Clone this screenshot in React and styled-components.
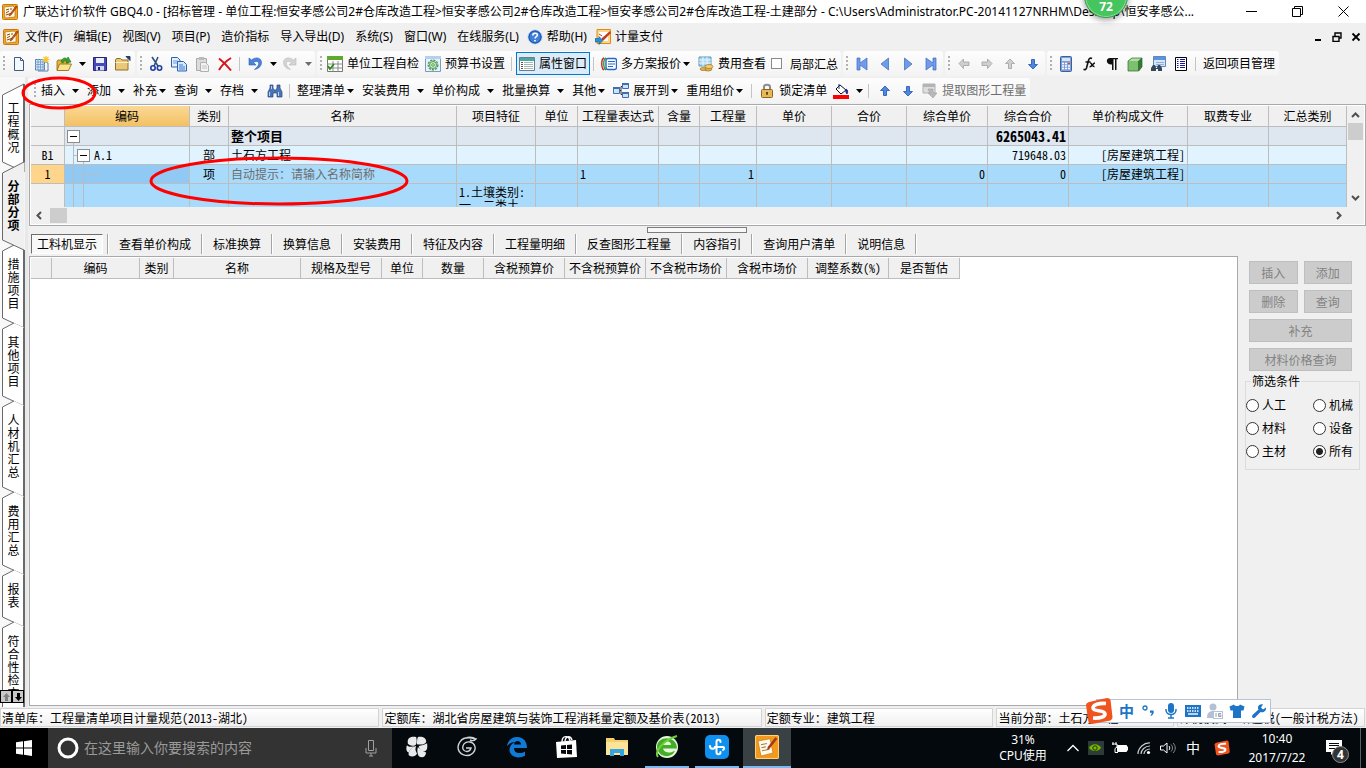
import React, { useState } from "react";
import styled, { createGlobalStyle, css } from "styled-components";

const ICONS = {
  app: (
    <>
      <rect x="0.5" y="0.5" width="15" height="15" rx="1" fill="#f5a623" stroke="#c9780c" />
      <path d="M2 3l9-1 2 2v9l-10 1z" fill="#fff8e0" stroke="#a85a08" strokeWidth=".6" />
      <path d="M4 6l3-1M4 9l3-2M4 11l6-2M8 5l2 0" stroke="#8a4a10" />
      <path d="M14 2L8 10l-1 2 2-1 6-8z" fill="#d4581c" stroke="#7a2a08" strokeWidth=".6" />
    </>
  ),
  newDoc: (
    <path d="M3.500 1.500h6l3 3v10h-9zM9.500 1.500v3h3" fill="#f4f8ff" stroke="#44597c" />
  ),
  newGrid: (
    <>
      <path d="M1.500 3.500h9v10.500h-9z" fill="#dcebfb" stroke="#5b80b0" />
      <path d="M1 6h10M1 8.500h10M1 11h10M4 3v11M6.500 3v11M9 3v11" stroke="#7fa3d0" />
      <path d="M11 6l3 1v8H4" fill="none" stroke="#5b80b0" />
      <path d="M12 0v7M8.500 3.500h7M9.500 1l5 5M14.500 1l-5 5" stroke="#f7c52c" strokeWidth="1.200" />
    </>
  ),
  open: (
    <>
      <path d="M1 5l1-1h4l1 1h5v9H1z" fill="#e6b73c" stroke="#8a6310" strokeWidth=".8" />
      <path d="M3.500 8h12l-3 6.500H1z" fill="#fbe28c" stroke="#8a6310" strokeWidth=".8" />
      <path d="M5 6c1-4 4-5 6-3l1-2 3 5-5 1 1-2c-2-1-3-1-4 2z" fill="#36a52e" stroke="#1c6b18" strokeWidth=".6" />
    </>
  ),
  save: (
    <>
      <path d="M1.500 1.500h13v13h-13z" fill="#4a49b8" stroke="#26256f" />
      <path d="M4 2h8v5H4z" fill="#e9efff" />
      <path d="M4 10h8v4.500H4z" fill="#cfd6f3" />
      <path d="M6 11h2v3H6z" fill="#26256f" />
    </>
  ),
  folder: (
    <>
      <path d="M.5 4l1-1.500h4L7 4h6v10H.5z" fill="#e9c877" stroke="#8e6f2a" />
      <path d="M.5 6.500h13" stroke="#fff2c8" />
      <path d="M11 .5h4v4z" stroke="#20406a" fill="#20406a" />
    </>
  ),
  cut: (
    <>
      <path d="M4 1l6 9M10 1L6 10" stroke="#31507e" strokeWidth="1.600" />
      <circle cx="5" cy="12" r="2.200" fill="none" stroke="#1c3fa0" strokeWidth="1.600" />
      <circle cx="11.500" cy="12" r="2.200" fill="none" stroke="#1c3fa0" strokeWidth="1.600" />
    </>
  ),
  copy: (
    <>
      <path d="M.5 1.500h6l2.500 2.500v7H.5z" fill="#e4f0ff" stroke="#2c62b4" />
      <path d="M2 5h5M2 7h5" stroke="#6c9be0" />
      <path d="M6.500 5.500h6l3 3v6.500h-9z" fill="#d5e8ff" stroke="#2c62b4" />
      <path d="M8 9h4M8 11h6M8 13h6" stroke="#3b7bd0" />
    </>
  ),
  paste: (
    <>
      <path d="M2.500 2.500h10v12h-10z" fill="#dcdcdc" stroke="#aaa" />
      <path d="M5 1h5v3H5z" fill="#bbb" />
      <path d="M6.500 6.500h5l3 3v6h-8z" fill="#f2f2f2" stroke="#b0b0b0" />
      <path d="M8 10h5M8 12h5" stroke="#c4c4c4" />
    </>
  ),
  del: <path d="M2 2.500c4 3 8 7 12 12M14 2c-5 3-9 7-12 12" stroke="#d4141c" strokeWidth="2" fill="none" />,
  undo: (
    <path d="M2 2v7h7L6.500 6.500c3-2 6-1 5 2-.4 2-2 3-4 5 5-1 7-4 7-7 0-5-6-6-10-2.500z" fill="#4b83dc" stroke="#2b5cb0" strokeWidth=".6" />
  ),
  redo: (
    <path d="M14 2v7H7l2.500-2.500c-3-2-6-1-5 2 .4 2 2 3 4 5-5-1-7-4-7-7 0-5 6-6 10-2.500z" fill="#d4d4d4" stroke="#b8b8b8" strokeWidth=".6" />
  ),
  check: (
    <>
      <path d="M.5.5h15v15H.5z" fill="#fff" stroke="#777" />
      <path d="M0 0h16v4H0z" fill="#5faa2c" />
      <path d="M6 5v11M0 8h16M0 12h16M11 5v11" stroke="#8a8a8a" />
      <path d="M1 10l2 3 4-5" stroke="#2c8c18" strokeWidth="1.800" fill="none" />
    </>
  ),
  gear: (
    <>
      <path d="M.5.5h15v15H.5z" fill="#e8f2fb" stroke="#7a9cc0" />
      <path d="M0 0h16v3H0z" fill="#b4d0ee" />
      <circle cx="8" cy="9" r="4.800" fill="none" stroke="#4f9a52" strokeWidth="1.400" strokeDasharray="2.200 1" />
      <circle cx="8" cy="9" r="3.500" fill="#d4ecd0" stroke="#4f9a52" />
      <circle cx="8" cy="9" r="1.300" fill="#fff" stroke="#4f9a52" />
    </>
  ),
  props: (
    <>
      <path d="M.5 1.500h15v13H.5z" fill="#fff" stroke="#6b7d8c" />
      <path d="M1 2h14v3H1z" fill="#4fa5a0" />
      <path d="M2 6.500h2M2 8.500h2M2 10.500h2M2 12.500h2" stroke="#555" />
      <path d="M5 6.500h9M5 8.500h9M5 10.500h9M5 12.500h9" stroke="#a0b8b0" />
    </>
  ),
  plans: (
    <>
      <path d="M3 2C0 3 0 12 3 14" stroke="#d02020" strokeWidth="1.400" fill="none" />
      <path d="M5 2C2 3 2 12 5 14" stroke="#2ba03a" strokeWidth="1.400" fill="none" />
      <rect x="5" y="2.500" width="10.500" height="11" rx="2" fill="#fff" stroke="#2668d0" strokeWidth="1.400" />
      <path d="M7 5.500h7M7 8h7M7 10.500h5" stroke="#2668d0" />
    </>
  ),
  cost: (
    <>
      <path d="M1 1h12v9H1z" fill="#a9d4ee" stroke="#5f98bd" />
      <path d="M1 4h12M1 7h12M5 1v9M9 1v9" stroke="#e9f6ff" />
      <ellipse cx="10" cy="13" rx="4" ry="2" fill="#e0b050" stroke="#946818" strokeWidth=".6" />
      <ellipse cx="11" cy="10.500" rx="4" ry="2" fill="#f3cc74" stroke="#946818" strokeWidth=".6" />
      <ellipse cx="5" cy="13" rx="3" ry="1.500" fill="#e0b050" stroke="#946818" strokeWidth=".6" />
    </>
  ),
  first: <path d="M3 2h3v5l7-5v12L6 9v5H3z" fill="#6f9bea" stroke="#3b68bd" strokeWidth=".7" />,
  prev: <path d="M11.500 2v12L4 8z" fill="#6f9bea" stroke="#3b68bd" strokeWidth=".7" />,
  next: <path d="M4.500 2v12L12 8z" fill="#6f9bea" stroke="#3b68bd" strokeWidth=".7" />,
  last: <path d="M13 2h-3v5L3 2v12l7-5v5h3z" fill="#6f9bea" stroke="#3b68bd" strokeWidth=".7" />,
  left: <path d="M3 7.500L7.500 3v3H13v3.500H7.500v3z" fill="#d0d0d0" stroke="#a0a0a0" strokeWidth=".8" />,
  right: <path d="M13 7.500L8.500 3v3H3v3.500h5.500v3z" fill="#d0d0d0" stroke="#a0a0a0" strokeWidth=".8" />,
  upGrey: <path d="M8 3l4.500 4.500h-3v5h-3v-5h-3z" fill="#d0d0d0" stroke="#a0a0a0" strokeWidth=".8" />,
  up: <path d="M8 3l4.500 4.500h-3v5h-3v-5h-3z" fill="#4d87e4" stroke="#2353ab" strokeWidth=".8" />,
  down: <path d="M8 13L3.500 8.500h3v-5h3v5h3z" fill="#4d87e4" stroke="#2353ab" strokeWidth=".8" />,
  calc: (
    <>
      <rect x="2.500" y=".5" width="11" height="15" rx="1" fill="#7c9fd6" stroke="#3f5f9c" />
      <path d="M4 2h8v3H4z" fill="#d5e6ff" />
      <path d="M4 7.500h8M4 10h8M4 12.500h8" stroke="#fff" strokeWidth="1.600" strokeDasharray="2 1" />
      <path d="M10 7.500h2" stroke="#d04040" strokeWidth="1.600" />
    </>
  ),
  fx: (
    <path d="M11 2.500c-2-1-3 0-3.500 2L5.500 12c-.5 1.500-1.500 2-3 1.200M4.500 6h5M9 7c2-.5 2 4 4.500 3.500M14 7c-2 0-3 4-5.500 3.700" fill="none" stroke="#111" strokeWidth="1.600" />
  ),
  para: <path d="M6 2h8v1.300h-1.500V14H11V3.300H9.500V14H8V8.500C1.500 9 1.500 2 6 2z" fill="#111" />,
  cube: (
    <>
      <path d="M1 5l4-3h10v9l-3 4H1z" fill="#2f7a34" />
      <path d="M1 5h10.500v10H1z" fill="#7cc070" />
      <path d="M1 5l4-3h10l-3.500 3z" fill="#b2dfa8" />
      <path d="M11.500 5v10M11.500 5L15 2M1 5v10h10.500L15 11V2H5L1 5z" fill="none" stroke="#2c6a2c" strokeWidth=".7" />
    </>
  ),
  find: (
    <>
      <path d="M3.500.5h12v10h-12z" fill="#d6e6fa" stroke="#5f86bb" />
      <path d="M4 1h11v3H4z" fill="#5a94de" />
      <path d="M6 6.500h8M6 8.500h8" stroke="#8fb0dc" />
      <path d="M1 15v-3l2-3h2l1 3h1l1-3h2l2 3v3H8v-2H6v2z" fill="#36465c" />
    </>
  ),
  list: (
    <>
      <path d="M2.500 1.500h11v13h-11z" fill="#fff" stroke="#000" />
      <path d="M4 3.500h1.500M4 5.500h1.500M4 7.500h1.500M4 9.500h1.500M4 11.500h1.500M7 3.500h5M7 5.500h5M7 7.500h5M7 9.500h5M7 11.500h5" stroke="#15159a" />
    </>
  ),
  binoculars: (
    <>
      <path d="M1 14V9l2-4V2h3v3l1 2h2l1-2V2h3v3l2 4v5h-5v-4H6v4z" fill="#4a76b8" stroke="#23467f" strokeWidth=".7" />
      <path d="M2.500 9v4M11.500 9v4M4.500 3v3" stroke="#b8d2f4" />
    </>
  ),
  expand: (
    <>
      <path d="M.5 4.500h6v6h-6zM9.500.5h6v5h-6zM9.500 9.500h6v5h-6z" fill="#cfe2fa" stroke="#3f6fb3" />
      <path d="M9 0h7v2H9zM9 9h7v2H9zM0 4h7v2H0z" fill="#3f6fb3" />
      <path d="M7 7.500h1M8 3.500v8M8 3.500h1M8 11.500h1" stroke="#333" fill="none" />
    </>
  ),
  lock: (
    <>
      <path d="M5 7V4c0-3 6-3 6 0v3" fill="none" stroke="#8c8c8c" strokeWidth="2" />
      <rect x="2.500" y="6.500" width="11" height="8" rx="1" fill="#e8b95c" stroke="#8f6418" />
      <path d="M8 9v3M7 10h2" stroke="#5c3d08" strokeWidth="1.300" />
    </>
  ),
  fill: (
    <>
      <path d="M3 6l4-4 6 5-5 4z" fill="#fff" stroke="#111" />
      <path d="M6 1v5M13 6c2 1 2 3 1 5-1-1-1.500-3-1-5z" fill="#1c2c8c" stroke="#1c2c8c" />
      <path d="M0 12h16v4H0z" fill="#f00" />
    </>
  ),
  extract: (
    <>
      <path d="M1 1h12v9H1z" fill="#ddd" stroke="#b0b0b0" />
      <path d="M1 1h12v3H1z" fill="#b4b4b4" />
      <path d="M6 6h5v3l1 1h3l-4 5-5-5h2z" fill="#b8b8b8" stroke="#999" strokeWidth=".5" />
    </>
  ),
  help: (
    <>
      <circle cx="8" cy="8" r="7.200" fill="#3f7fd8" stroke="#cfe0f5" />
      <circle cx="8" cy="8" r="6" fill="none" stroke="#1d50a4" />
      <path d="M5.800 6.500c0-3 4.600-3 4.600-.5 0 1.800-2.300 1.600-2.300 3.500M8 11v1.600" fill="none" stroke="#fff" strokeWidth="1.600" />
    </>
  ),
  pay: (
    <>
      <path d="M2 .5h13.500v14H2z" fill="#fbd68a" stroke="#e08a14" />
      <path d="M4 3h9v9H4z" fill="#fff" />
      <path d="M15 2L7 9l-1 3 3-1 7-7z" fill="#c43c20" />
      <path d="M4 5l3 2" stroke="#c43c20" />
      <path d="M0 9.500h4V7.500l4 4-4 4v-2.500H0z" fill="#2a90d6" stroke="#125a94" strokeWidth=".6" />
    </>
  ),
};

const Icon = ({ name }) => (
  <svg width="16" height="16" viewBox="0 0 16 16" fill="none" aria-hidden="true">
    {ICONS[name]}
  </svg>
);

const Caret = () => (
  <svg width="7" height="4" viewBox="0 0 7 4" aria-hidden="true">
    <path d="M0 0h7L3.500 4z" fill="currentColor" />
  </svg>
);

const Tool = ({ icon, label, caret, pressed, disabled }) => (
  <ToolButton
    type="button"
    $labelled={!!label}
    $caret={!!caret}
    $pressed={pressed}
    $disabled={disabled}
    aria-label={label || icon}
  >
    {icon && <Icon name={icon} />}
    {label && <span>{label}</span>}
    {caret && (
      <CaretBox $split={caret === "split"} $labelled={!!label}>
        <Caret />
      </CaretBox>
    )}
  </ToolButton>
);

const MENU = [
  ["文件(F)"],
  ["编辑(E)"],
  ["视图(V)"],
  ["项目(P)"],
  ["造价指标"],
  ["导入导出(D)"],
  ["系统(S)"],
  ["窗口(W)"],
  ["在线服务(L)"],
  ["帮助(H)", "help"],
  ["计量支付", "pay"],
];

const SIDE_TABS = ["工程概况", "分部分项", "措施项目", "其他项目", "人材机汇总", "费用汇总", "报表", "符合性检查"];

const SideTab = ({ label, active, first, onClick }) => {
  const h = label.length * 13 + 26;
  const full = active || first;
  const top = full ? "M24 -4L2.500 7" : "M14 1L2.500 7";
  const shape = full ? "M24.500 -4L2.500 7" : "M24.500 6L14 1L2.500 7";
  return (
    <SideTabButton type="button" $active={active} onClick={onClick}>
      <svg width="25" height={h} viewBox={`0 0 25 ${h}`} aria-hidden="true">
        <path d={`${shape}V${h - 4}L24.500 ${h + 6}z`} fill={active ? "#f0f0f0" : "#fff"} />
        <path d={`${top}V${h - 4}L24 ${h + 6}`} fill="none" stroke="#6a6a6a" />
        {!active && <path d={`M24 ${first ? -4 : 6}V${h + 6}`} stroke="#6a6a6a" strokeWidth="2" />}
      </svg>
      <span>{label}</span>
    </SideTabButton>
  );
};

const COLUMNS = [
  ["", 34],
  ["编码", 125],
  ["类别", 39],
  ["名称", 228],
  ["项目特征", 79],
  ["单位", 42],
  ["工程量表达式", 81],
  ["含量", 41],
  ["工程量", 57],
  ["单价", 75],
  ["合价", 75],
  ["综合单价", 81],
  ["综合合价", 81],
  ["单价构成文件", 119],
  ["取费专业", 81],
  ["汇总类别"],
];

const DETAIL_COLUMNS = [
  ["", 21],
  ["编码", 88],
  ["类别", 34],
  ["名称", 127],
  ["规格及型号", 81],
  ["单位", 41],
  ["数量", 61],
  ["含税预算价", 81],
  ["不含税预算价", 81],
  ["不含税市场价", 81],
  ["含税市场价", 81],
  ["调整系数(%)", 81],
  ["是否暂估", 71],
];

const DETAIL_TABS = [
  "工料机显示",
  "查看单价构成",
  "标准换算",
  "换算信息",
  "安装费用",
  "特征及内容",
  "工程量明细",
  "反查图形工程量",
  "内容指引",
  "查询用户清单",
  "说明信息",
];

const STATUS = [
  ["清单库：工程量清单项目计量规范(2013-湖北)", 381],
  ["定额库：湖北省房屋建筑与装饰工程消耗量定额及基价表(2013)", 381],
  ["定额专业：建筑工程", 228],
  ["当前分部：土石方工程", 176],
  ["计税模式：增值税(一般计税方法)", 187],
];

const blanks = (n) => Array.from({ length: n }, (_, i) => <Td key={i} />);

const ProjectGrid = () => (
  <GridFrame>
    <GridView>
      <Table>
        <colgroup>
          {COLUMNS.map(([name, w], i) => (
            <Col key={i} $w={w} />
          ))}
        </colgroup>
        <thead>
          <tr>
            {COLUMNS.map(([name], i) => (
              <Th key={i} $active={name === "编码"}>
                {name}
              </Th>
            ))}
          </tr>
        </thead>
        <tbody>
          <Row $bg="#dee6f0">
            <RowHead />
            <TreeTd $level={0}>
              <TreeCell>
                <Toggle type="button" aria-label="折叠" />
              </TreeCell>
            </TreeTd>
            <Td />
            <Td $strong>整个项目</Td>
            {blanks(8)}
            <Td $strong $align="right">
              <Total>6265043.41</Total>
            </Td>
            {blanks(3)}
          </Row>
          <Row $bg="#e1f3ff">
            <RowHead>B1</RowHead>
            <TreeTd $level={1}>
              <TreeCell $level={1}>
                <Toggle type="button" aria-label="折叠" />
                <span>A.1</span>
              </TreeCell>
            </TreeTd>
            <Td $align="center">部</Td>
            <Td>土石方工程</Td>
            {blanks(8)}
            <Td $align="right">719648.03</Td>
            <Td $align="right">[房屋建筑工程]</Td>
            {blanks(2)}
          </Row>
          <Row $bg="#a8dbfb">
            <RowHead $active>1</RowHead>
            <TreeTd $level={2} $selected />
            <Td $align="center">项</Td>
            <Td $muted>自动提示：请输入名称简称</Td>
            {blanks(2)}
            <Td>1</Td>
            <Td />
            <Td $align="right">1</Td>
            {blanks(2)}
            <Td $align="right">0</Td>
            <Td $align="right">0</Td>
            <Td $align="right">[房屋建筑工程]</Td>
            {blanks(2)}
          </Row>
          <Row $bg="#a8dbfb" $tall>
            <RowHead />
            <TreeTd $level={3} />
            {blanks(2)}
            <Td>
              <Clip>
                1.土壤类别:
                <br />
                一、二类土
              </Clip>
            </Td>
            {blanks(11)}
          </Row>
        </tbody>
      </Table>
      <VScroll>
        <svg width="9" height="6" viewBox="0 0 9 6">
          <path d="M1 5l3.500-3.500L8 5" fill="none" stroke="#505050" strokeWidth="2" />
        </svg>
        <Thumb $vertical />
        <svg width="9" height="6" viewBox="0 0 9 6">
          <path d="M1 1l3.500 3.500L8 1" fill="none" stroke="#505050" strokeWidth="2" />
        </svg>
      </VScroll>
    </GridView>
    <HScroll>
      <svg width="6" height="9" viewBox="0 0 6 9">
        <path d="M5 1L1.500 4.500 5 8" fill="none" stroke="#505050" strokeWidth="2" />
      </svg>
      <Thumb />
      <svg width="6" height="9" viewBox="0 0 6 9">
        <path d="M1 1l3.500 3.500L1 8" fill="none" stroke="#505050" strokeWidth="2" />
      </svg>
    </HScroll>
  </GridFrame>
);

const FilterPanel = () => {
  const [kind, setKind] = useState("所有");
  return (
    <SidePanel>
      <Actions>
        <Action disabled>插入</Action>
        <Action disabled>添加</Action>
        <Action disabled>删除</Action>
        <Action disabled>查询</Action>
        <Action disabled $wide>
          补充
        </Action>
        <Action disabled $wide>
          材料价格查询
        </Action>
      </Actions>
      <Fieldset>
        <legend>筛选条件</legend>
        {["人工", "机械", "材料", "设备", "主材", "所有"].map((k) => (
          <label key={k}>
            <input type="radio" name="kind" checked={kind === k} onChange={() => setKind(k)} />
            {k}
          </label>
        ))}
      </Fieldset>
    </SidePanel>
  );
};

const SogouS = ({ size }) => (
  <svg width={size} height={size} viewBox="0 0 28 28" aria-hidden="true">
    <path d="M4 5L22 1q3 0 3.500 2l2 17q0 3-2 3.500L7 27q-3 0-3.500-2L1 8q0-2 3-3z" fill="#f1531f" />
    <path d="M21 6.500C14 6 8 7.500 8 11c0 4 12 1.500 12 6 0 3-5 4.500-12 4" fill="none" stroke="#fff" strokeWidth="3.600" />
  </svg>
);

const ImeBar = () => (
  <Ime>
    <SogouS size={28} />
    <b>中</b>
    <svg width="16" height="16" viewBox="0 0 16 16">
      <circle cx="4" cy="5" r="2" fill="none" stroke="#1e74c6" strokeWidth="1.300" />
      <path d="M9 7.500h3.500c.8 2-.3 4.500-2.500 5.500l-.5-1c1-.7 1.300-1.500 1.200-2.300H9z" fill="#1e74c6" />
    </svg>
    <svg width="16" height="16" viewBox="0 0 16 16">
      <rect x="5" y="0" width="6" height="10" rx="3" fill="#1e74c6" />
      <path d="M3 6v1c0 6 10 6 10 0V6M8 12v3M5 15h6" fill="none" stroke="#1e74c6" strokeWidth="1.500" />
    </svg>
    <svg width="16" height="16" viewBox="0 0 16 16">
      <path d="M0 2h16v12H0z" fill="#1e74c6" />
      <path d="M2 5h12M2 8h12" stroke="#fff" strokeWidth="1.300" strokeDasharray="1.500 1" />
      <path d="M3 11h10" stroke="#fff" strokeWidth="1.400" />
    </svg>
    <svg width="16" height="16" viewBox="0 0 16 16">
      <circle cx="6" cy="4" r="3.500" fill="#b4c0d4" />
      <path d="M0 15c0-5 2-7 6-7s4 1 4 2v5z" fill="#b4c0d4" />
      <rect x="6.500" y="8.500" width="9" height="7" fill="#fff" stroke="#b4c0d4" />
      <path d="M9 10v4M14 10.500h-2.500v3H14V12h-2" fill="none" stroke="#93a2bb" />
    </svg>
    <svg width="16" height="16" viewBox="0 0 16 16">
      <path d="M5 1.500c1 2 5 2 6 0l4.500 2-1 4H12V15H4V7.500H1.500l-1-4z" fill="#1e74c6" />
    </svg>
    <svg width="16" height="16" viewBox="0 0 16 16">
      <path d="M15 4.500l-3 2-2-2 2-3C8 .5 6 4 7.500 6.500L1.500 12c-1.500 2 .8 4 2.500 2.500L9.500 9C12 10 15.500 8.500 15 4.500z" fill="#1e74c6" />
    </svg>
  </Ime>
);

const Taskbar = () => (
  <Bar>
    <Start type="button" aria-label="开始">
      <svg width="16" height="16" viewBox="0 0 16 16">
        <path d="M0 2.300l7-1v6.300H0zM8 1.200L16 0v7.600H8zM0 8.400h7v6.300l-7-1zM8 8.400h8V16l-8-1.200z" fill="#fff" />
      </svg>
    </Start>
    <Search>
      <svg width="22" height="22" viewBox="0 0 22 22">
        <circle cx="11" cy="11" r="9" fill="none" stroke="#fff" strokeWidth="3" />
      </svg>
      <input type="text" placeholder="在这里输入你要搜索的内容" aria-label="搜索" />
      <svg width="12" height="18" viewBox="0 0 12 18">
        <path d="M3.500 1.500h5v10h-5zM1 9v5h10V9M6 14v3M4 17h4" fill="none" stroke="#a0a0a0" />
      </svg>
    </Search>
    <Apps>
      <TaskButton type="button" aria-label="应用">
        <svg width="22" height="22" viewBox="0 0 24 24">
          <g fill="#e8eaec">
            <path d="M11 1C4 0 1 3 2 8c1 3 6 3 8 2s2-6 1-9z" />
            <path d="M13 1c5-1 9 1 9 5 0 3-6 4-10 3 0-3 0-6 1-8z" />
            <path d="M23 8c1 7-1 9-4 9-3-1-5-3-5-6 3-1 6-1 9-3z" />
            <path d="M13 12c3 3 6 5 9 6-1 6-5 6-8 4-2-3-2-7-1-10z" />
            <path d="M11 11c-1 3-1 5 1 8-2 4-6 4-9 2-1-4 3-9 8-10z" />
            <path d="M1 10c2 2 5 2 8 1-2 2-5 4-6 7-3-1-3-5-2-8z" />
          </g>
        </svg>
      </TaskButton>
      <TaskButton type="button" aria-label="应用">
        <svg width="22" height="22" viewBox="0 0 22 22">
          <path d="M20 3C14-1 3 2 2 11c0 8 10 11 15 6 4-4 2-10-3-11-5-1-8 3-7 7 2 4 7 3 8-1h-5M5 4C10 0 16 2 20 3c-2 2-4 2-6 1" fill="none" stroke="#d0d4d6" strokeWidth="1.400" />
        </svg>
      </TaskButton>
      <TaskButton type="button" aria-label="Edge">
        <svg width="22" height="22" viewBox="0 0 22 22">
          <path d="M1 10C2 4 6 1 11 1c7 0 10 5 10 11H8c0 6 7 6 11 3.500v4.300C11 24 3 20 3.500 13 4 9.500 6 7.500 9 6 6 6 3 7.500 1 10zm7-1.500h7c0-4-6-5-7 0z" fill="#0f7bd8" />
        </svg>
      </TaskButton>
      <TaskButton type="button" aria-label="应用商店">
        <svg width="24" height="24" viewBox="0 0 24 24">
          <path d="M1 7l20-2 1 17-20 1z" fill="#fff" />
          <path d="M7 7c0-7 7-7 8-1M10 6c1-6 6-5 7-1" fill="none" stroke="#fff" strokeWidth="1.400" />
          <path d="M6 10.500l5-.5v4H6zM12 10l5-.5V14h-5zM6 15h5v4l-5-.5zM12 15h5v4.500l-5-.4z" fill="#05090b" />
        </svg>
      </TaskButton>
      <TaskButton type="button" aria-label="文件资源管理器">
        <svg width="22" height="20" viewBox="0 0 22 20">
          <path d="M0 1h8l1 2h13v15H0z" fill="#f3d06a" />
          <path d="M0 5h22v13H0z" fill="#fbe39a" />
          <path d="M4 19v-7h14v7h-4v-3H8v3z" fill="#35a3dd" />
        </svg>
      </TaskButton>
      <TaskButton type="button" aria-label="浏览器" $open>
        <svg width="24" height="24" viewBox="0 0 24 24">
          <circle cx="12" cy="12" r="11" fill="#e4f6dc" />
          <path d="M2 12c0-12 20-12 20 1.500H8c1 5 8 5 12 2C17 24 3 23 2 12zm6-2h8c0-5-8-5-8 0z" fill="#43ad27" />
          <path d="M3 22C-1 17 8 5 22 1" fill="none" stroke="#6ecf38" strokeWidth="2" />
        </svg>
      </TaskButton>
      <TaskButton type="button" aria-label="应用" $open>
        <svg width="24" height="24" viewBox="0 0 24 24">
          <rect width="24" height="24" rx="5" fill="#0f90ee" />
          <path d="M15.500 7c0-3-4-3-4 0v10c0 3 4 3 4 0M5 11c0 3.500 4.500 3.500 5 1h8c1.500 0 1.500 2 0 3" fill="none" stroke="#fff" strokeWidth="2" strokeLinecap="round" />
        </svg>
      </TaskButton>
      <TaskButton type="button" aria-label="广联达" $open $active>
        <svg width="24" height="24" viewBox="0 0 16 16">
          <rect x=".3" y=".3" width="15.400" height="15.400" rx="1" fill="#f39a1c" stroke="#ffd27a" strokeWidth=".7" />
          <path d="M2 4l8-1.500 2 9.500-8 2z" fill="#fffbe8" stroke="#c06a10" strokeWidth=".4" />
          <path d="M4 6.500l4-.8M4.300 8.500l3-.6M4.700 10.500l5-1" stroke="#a08050" strokeWidth=".7" />
          <path d="M13.500 1.500L8.500 8l-.5 2 1.800-1L15 2.500z" fill="#a4391a" />
        </svg>
      </TaskButton>
    </Apps>
    <Cpu>
      31%
      <br />
      CPU使用
    </Cpu>
    <Tray>
      <svg width="14" height="16" viewBox="0 0 14 16">
        <path d="M1.500 11L7 5.500l5.500 5.500" fill="none" stroke="#fff" strokeWidth="1.300" />
      </svg>
      <svg width="16" height="16" viewBox="0 0 16 16">
        <path d="M0 1h16v14H0z" fill="#2e3b36" />
        <path d="M1 8c3-5 9-5 12 0-3 4-9 4-12 0z" fill="#76b900" />
        <circle cx="7" cy="8" r="2.200" fill="none" stroke="#1e3200" />
      </svg>
      <svg width="16" height="16" viewBox="0 0 16 16">
        <path d="M5.500 5.500h9v6h-9z" fill="#fff" stroke="#fff" />
        <path d="M15 7h1v3h-1zM1 2v3M4 2v3" stroke="#fff" fill="#fff" />
        <path d="M0 4h5v3L3 8.500v4h3" fill="none" stroke="#fff" />
      </svg>
      <svg width="16" height="16" viewBox="0 0 16 16">
        <path d="M2 14C2 8 8 2.500 14 3M5 14c0-4 4-8 9-8M8 14c0-3 3-5 6-5" fill="none" stroke="#c8ccce" strokeWidth="1.200" />
        <circle cx="12.500" cy="12.500" r="1.600" fill="#fff" />
      </svg>
      <svg width="16" height="16" viewBox="0 0 16 16">
        <path d="M.5 6h3L7 3v10L3.500 10h-3zM9 6c1 1 1 3 0 4" fill="none" stroke="#fff" />
        <path d="M11 4.500c2 2 2 5 0 7M13 3c3 3 3 7 0 10" fill="none" stroke="#8a9092" />
      </svg>
      <span>中</span>
      <SogouS size={16} />
    </Tray>
    <Clock>
      10:40
      <br />
      2017/7/22
    </Clock>
    <Notice type="button" aria-label="通知">
      <svg width="16" height="16" viewBox="0 0 16 16">
        <path d="M0 0h16v12H8l-3 3v-3H0z" fill="#fff" />
        <path d="M3 3.500h10M3 5.500h10M3 8.500h7" stroke="#05090b" />
      </svg>
      <Badge>4</Badge>
    </Notice>
  </Bar>
);

const App = () => {
  const [side, setSide] = useState("分部分项");
  const [tab, setTab] = useState("工料机显示");
  return (
    <Window>
      <GlobalStyle />
      <TitleBar>
        <Icon name="app" />
        <h1>
          广联达计价软件 GBQ4.0 - [招标管理 - 单位工程:恒安孝感公司2#仓库改造工程&gt;恒安孝感公司2#仓库改造工程&gt;恒安孝感公司2#仓库改造工程-土建部分 -
          C:\Users\Administrator.PC-20141127NRHM\Desktop\恒安孝感公...
        </h1>
        <WinButton type="button" aria-label="最小化">
          <svg width="11" height="11" viewBox="0 0 11 11">
            <path d="M0 5.500h11" stroke="#000" />
          </svg>
        </WinButton>
        <WinButton type="button" aria-label="还原">
          <svg width="11" height="11" viewBox="0 0 11 11">
            <path d="M.5 2.500h8v8h-8zM2.500 2.500v-2h8v8h-2" fill="none" stroke="#000" />
          </svg>
        </WinButton>
        <WinButton type="button" aria-label="关闭">
          <svg width="11" height="11" viewBox="0 0 11 11">
            <path d="M.5.500l10 10M10.500.500l-10 10" stroke="#000" />
          </svg>
        </WinButton>
      </TitleBar>

      <MenuBar>
        <Icon name="app" />
        {MENU.map(([label, icon]) => (
          <MenuItem type="button" key={label} $icon={!!icon}>
            {icon && <Icon name={icon} />}
            {label}
          </MenuItem>
        ))}
        <MdiButtons>
          <svg width="10" height="10" viewBox="0 0 10 10">
            <path d="M2 8h6" stroke="#000" strokeWidth="2" />
          </svg>
          <svg width="10" height="10" viewBox="0 0 10 10">
            <path d="M1 4.500h6v5H1zM3 4V1h6v5H7" fill="none" stroke="#000" strokeWidth="1.400" />
          </svg>
          <svg width="10" height="10" viewBox="0 0 10 10">
            <path d="M1.500 1.500l7 7M8.500 1.500l-7 7" stroke="#000" strokeWidth="1.800" />
          </svg>
        </MdiButtons>
      </MenuBar>

      <ToolRow>
        <ToolGroup>
          <Grip />
          <Tool icon="newDoc" />
          <Tool icon="newGrid" />
          <Tool icon="open" caret="menu" />
          <Tool icon="save" />
          <Tool icon="folder" />
        </ToolGroup>
        <ToolGroup>
          <Grip />
          <Tool icon="cut" />
          <Tool icon="copy" />
          <Tool icon="paste" disabled />
          <Tool icon="del" />
          <Divider />
          <Tool icon="undo" caret="menu" />
          <Tool icon="redo" caret="menu" disabled />
        </ToolGroup>
        <ToolGroup>
          <Grip />
          <Tool icon="check" label="单位工程自检" />
          <Tool icon="gear" label="预算书设置" />
          <Divider />
          <Tool icon="props" label="属性窗口" pressed />
          <Divider />
          <Tool icon="plans" label="多方案报价" caret="menu" />
          <Tool icon="cost" label="费用查看" />
          <CheckLabel>
            <input type="checkbox" />
            局部汇总
          </CheckLabel>
        </ToolGroup>
        <ToolGroup>
          <Grip />
          <Tool icon="first" />
          <Tool icon="prev" />
          <Tool icon="next" />
          <Tool icon="last" />
        </ToolGroup>
        <ToolGroup>
          <Grip />
          <Tool icon="left" disabled />
          <Tool icon="right" disabled />
          <Tool icon="upGrey" disabled />
          <Tool icon="down" />
        </ToolGroup>
        <ToolGroup>
          <Grip />
          <Tool icon="calc" />
          <Tool icon="fx" />
          <Tool icon="para" />
          <Tool icon="cube" />
          <Tool icon="find" />
          <Tool icon="list" />
          <Divider />
          <Tool label="返回项目管理" />
        </ToolGroup>
      </ToolRow>

      <Body>
        <SideTabs>
          <SideTabList>
            {SIDE_TABS.map((t, i) => (
              <SideTab key={t} label={t} first={i === 0} active={t === side} onClick={() => setSide(t)} />
            ))}
          </SideTabList>
          <SideScroll>
            <button type="button" disabled aria-label="上一个">
              <svg width="7" height="8" viewBox="0 0 7 8">
                <path d="M3.500 0L7 4H5v4H2V4H0z" fill="#808080" />
              </svg>
            </button>
            <button type="button" aria-label="下一个">
              <svg width="7" height="8" viewBox="0 0 7 8">
                <path d="M3.500 8L7 4H5V0H2v4H0z" fill="#000" />
              </svg>
            </button>
          </SideScroll>
        </SideTabs>

        <Main>
          <ToolRow>
            <ToolGroup>
              <Grip $inset />
              <Tool label="插入" caret="split" />
              <Tool label="添加" caret="split" />
              <Tool label="补充" caret="menu" />
              <Tool label="查询" caret="split" />
              <Tool label="存档" caret="split" />
              <Tool icon="binoculars" />
              <Divider />
              <Tool label="整理清单" caret="menu" />
              <Tool label="安装费用" caret="split" />
              <Tool label="单价构成" caret="split" />
              <Tool label="批量换算" caret="split" />
              <Tool label="其他" caret="menu" />
              <Tool icon="expand" label="展开到" caret="menu" />
              <Tool label="重用组价" caret="menu" />
              <Divider />
              <Tool icon="lock" label="锁定清单" />
              <Tool icon="fill" caret="menu" />
              <Divider />
              <Tool icon="up" />
              <Tool icon="down" />
              <Tool icon="extract" label="提取图形工程量" disabled />
            </ToolGroup>
          </ToolRow>

          <ProjectGrid />

          <Splitter>
            <span />
          </Splitter>

          <TabStrip>
            {DETAIL_TABS.map((t) => (
              <TabItem key={t}>
                <TabButton type="button" $active={t === tab} onClick={() => setTab(t)}>
                  {t}
                </TabButton>
              </TabItem>
            ))}
          </TabStrip>

          <Detail>
            <DetailFrame>
              <DetailTable>
                <colgroup>
                  {DETAIL_COLUMNS.map(([name, w], i) => (
                    <Col key={i} $w={w} />
                  ))}
                </colgroup>
                <thead>
                  <tr>
                    {DETAIL_COLUMNS.map(([name], i) => (
                      <Th key={i}>{name}</Th>
                    ))}
                  </tr>
                </thead>
              </DetailTable>
            </DetailFrame>
            <FilterPanel />
          </Detail>
        </Main>
      </Body>

      <StatusBar>
        {STATUS.map(([text, grow]) => (
          <StatusCell key={text} $grow={grow}>
            {text}
          </StatusCell>
        ))}
      </StatusBar>

      <Taskbar />
      <ImeBar />
      <Ball>72</Ball>
      <Marks width="420" height="220" viewBox="0 0 420 220" aria-hidden="true">
        <ellipse cx="59" cy="93" rx="36" ry="15" />
        <ellipse cx="279" cy="181" rx="128" ry="23" />
      </Marks>
    </Window>
  );
};
export default App;

const GlobalStyle = createGlobalStyle`
  * {
    box-sizing: border-box;
  }
  body {
    margin: 0;
    overflow: hidden;
    background: #f0f0f0;
  }
  button, input, fieldset, legend, h1 {
    margin: 0;
    padding: 0;
    border: none;
    font: inherit;
    color: inherit;
    background: none;
  }
  svg {
    display: block;
    flex: none;
  }
`;

const song = css`
  font-family: "Noto Sans Mono CJK SC", "Noto Sans CJK SC", monospace;
`;

const Window = styled.div`
  position: relative;
  display: flex;
  flex-direction: column;
  height: 100vh;
  background: #f0f0f0;
  color: #000;
  font: 12px/16px "Noto Sans", "Noto Sans CJK SC", sans-serif;
  white-space: nowrap;
`;

const TitleBar = styled.header`
  display: flex;
  align-items: center;
  flex: none;
  height: 23px;
  padding-left: 2px;
  background: #fff;
  h1 {
    flex: 1;
    min-width: 0;
    padding: 0 4px 0 5px;
    font-size: 12px;
    font-weight: 400;
    overflow: hidden;
    text-overflow: ellipsis;
  }
`;

const WinButton = styled.button`
  display: grid;
  place-items: center;
  flex: none;
  width: 46px;
  height: 20px;
`;

const MenuBar = styled.nav`
  display: flex;
  align-items: center;
  flex: none;
  gap: 11px;
  height: 27px;
  padding: 0 5px 0 3px;
  > svg {
    margin-right: -5px;
  }
`;

const MenuItem = styled.button`
  display: flex;
  align-items: center;
  gap: 4px;
  margin-left: ${(props) => (props.$icon ? "-3px" : "0")};
`;

const MdiButtons = styled.div`
  display: flex;
  gap: 9px;
  margin-left: auto;
`;

const ToolRow = styled.div`
  display: flex;
  align-items: center;
  flex: none;
  gap: 2px;
  height: 27px;
  overflow: hidden;
`;

const ToolGroup = styled.div`
  display: flex;
  align-items: center;
  flex: none;
  height: 25px;
  padding-right: 1px;
  border-radius: 3px;
  background: linear-gradient(#fdfdfd, #f3f3f3);
`;

const Grip = styled.span`
  width: ${(props) => (props.$inset ? "10px" : "7px")};
  height: 15px;
  background: repeating-linear-gradient(#b0b0b0 0 2px, transparent 2px 4px) right 2px top / 2px 15px no-repeat;
`;

const ToolButton = styled.button`
  display: flex;
  align-items: center;
  justify-content: center;
  gap: 4px;
  height: 23px;
  min-width: 23px;
  padding: 0 ${(props) => (props.$labelled ? "3px" : "0")};
  color: ${(props) => (props.$disabled ? "#6d6d6d" : "#000")};
  ${(props) => props.$caret && !props.$labelled && "padding-left: 3px;"}
  ${(props) =>
    props.$pressed &&
    css`
      padding: 0 2px;
      border: 1px solid #0078d7;
      background: #dcebf8;
    `}
`;

const CaretBox = styled.span`
  display: grid;
  place-items: center;
  width: ${(props) => (props.$split ? "16px" : props.$labelled ? "11px" : "12px")};
  padding-left: ${(props) => (props.$split ? "4px" : "0")};
  margin-left: ${(props) => (props.$labelled ? "-4px" : "0")};
`;

const Divider = styled.span`
  width: 1px;
  height: 14px;
  margin: 0 4px 0 3px;
  background: #c4c4c4;
`;

const CheckLabel = styled.label`
  display: flex;
  align-items: center;
  gap: 8px;
  padding: 0 2px;
  ${song}
  input {
    appearance: none;
    width: 11px;
    height: 11px;
    border: 1px solid #8a8a8a;
    background: #fff;
  }
`;

const Body = styled.div`
  display: flex;
  flex: 1;
  min-height: 0;
`;

const SideTabs = styled.aside`
  position: relative;
  flex: none;
  width: 28px;
  overflow: hidden;
  background: #f8f8f8;
  border-right: 3px solid #e8e8e8;
`;

const SideTabList = styled.div`
  padding-top: 11px;
`;

const SideTabButton = styled.button`
  position: relative;
  display: block;
  z-index: ${(props) => (props.$active ? 1 : 0)};
  padding: 13px 5px 13px 7px;
  line-height: 13px;
  font-weight: ${(props) => (props.$active ? 700 : 400)};
  ${song}
  svg {
    position: absolute;
    top: 0;
    left: 0;
    overflow: visible;
  }
  span {
    position: relative;
    display: block;
    width: 13px;
    white-space: normal;
    word-break: break-all;
  }
`;

const SideScroll = styled.div`
  position: absolute;
  left: 0;
  bottom: 4px;
  z-index: 2;
  display: flex;
  button {
    display: grid;
    place-items: center;
    width: 12px;
    height: 13px;
    border: 1px solid #000;
    background: #c8c8c8;
  }
`;

const Main = styled.main`
  display: flex;
  flex-direction: column;
  flex: 1;
  min-width: 0;
`;

const GridFrame = styled.section`
  flex: none;
  margin-left: 1px;
  border: 1px solid #a9a9ad;
  padding: 1px;
  background: #fff;
  ${song}
`;

const GridView = styled.div`
  display: flex;
  height: 101px;
  overflow: hidden;
`;

const Table = styled.table`
  flex: 1;
  width: 100%;
  table-layout: fixed;
  border-collapse: separate;
  border-spacing: 0;
`;

const DetailTable = styled(Table)`
  width: 929px;
  ${song}
`;

const Col = styled.col`
  width: ${(props) => (props.$w ? `${props.$w}px` : "auto")};
`;

const Th = styled.th`
  height: 21px;
  padding: 0;
  overflow: hidden;
  border-right: 1px solid #bdbdbd;
  border-bottom: 1px solid #bdbdbd;
  background: ${(props) => (props.$active ? "linear-gradient(#fbd896, #f3c163)" : "#f0f0f0")};
  font-weight: 400;
  text-align: center;
`;

const Row = styled.tr`
  background: ${(props) => props.$bg};
  height: ${(props) => (props.$tall ? "25px" : "19px")};
`;

const Td = styled.td`
  height: 18px;
  padding: 0 2px;
  overflow: hidden;
  border-right: 1px solid #bdbdbd;
  border-bottom: 1px solid #bdbdbd;
  text-align: ${(props) => props.$align || "left"};
  color: ${(props) => (props.$muted ? "#6d6d6d" : "#000")};
  font-size: ${(props) => (props.$strong ? "13px" : "12px")};
  font-weight: ${(props) => (props.$strong ? 700 : 400)};
`;

const RowHead = styled(Td).attrs({ as: "th" })`
  background: ${(props) => (props.$active ? "#ffd58c" : "#f0f0f0")};
  text-align: center;
`;

const Total = styled.span`
  font-size: 14px;
  line-height: 16px;
`;

const line = "linear-gradient(#b4bcc4, #b4bcc4)";
const guides = [
  `${line} 8px 100% / 1px 9px no-repeat`,
  `${line} 8px 0 / 1px 100% no-repeat, ${line} 18px 100% / 1px 9px no-repeat, ${line} 8px 9px / 5px 1px no-repeat`,
  `${line} 8px 0 / 1px 100% no-repeat, ${line} 18px 0 / 1px 100% no-repeat, ${line} 18px 9px / 17px 1px no-repeat`,
  `${line} 8px 0 / 1px 100% no-repeat, ${line} 18px 0 / 1px 100% no-repeat`,
];

const TreeTd = styled(Td)`
  background: ${(props) => guides[props.$level]}${(props) => (props.$selected ? ", #90caf4" : "")};
`;

const TreeCell = styled.div`
  display: flex;
  align-items: center;
  gap: 4px;
  padding-left: ${(props) => (props.$level ? "10px" : "0")};
`;

const Toggle = styled.button`
  width: 13px;
  height: 13px;
  border: 1px solid #8c8c8c;
  background: linear-gradient(#000, #000) center / 7px 1px no-repeat, #fff;
`;

const Clip = styled.div`
  height: 23px;
  line-height: 13px;
  overflow: hidden;
`;

const VScroll = styled.div`
  display: flex;
  flex-direction: column;
  align-items: center;
  flex: none;
  width: 17px;
  padding: 6px 0;
  background: #f0f0f0;
  svg:last-child {
    margin-top: auto;
  }
`;

const HScroll = styled.div`
  display: flex;
  align-items: center;
  gap: 8px;
  height: 17px;
  padding: 0 22px 0 5px;
  background: #f0f0f0;
  svg:last-child {
    margin-left: auto;
  }
`;

const Thumb = styled.span`
  width: ${(props) => (props.$vertical ? "15px" : "17px")};
  height: ${(props) => (props.$vertical ? "17px" : "15px")};
  margin-top: ${(props) => (props.$vertical ? "5px" : "0")};
  background: #cdcdcd;
`;

const Splitter = styled.div`
  display: flex;
  justify-content: center;
  flex: none;
  height: 8px;
  padding-top: 1px;
  span {
    width: 100px;
    height: 6px;
    border: 1px solid #7c7c7c;
    background: #f8f8f8;
  }
`;

const TabStrip = styled.div`
  display: flex;
  flex: none;
  height: 22px;
  padding-left: 3px;
  ${song}
`;

const TabItem = styled.div`
  height: 20px;
  padding: 0 5px 0 6px;
  border-right: 1px solid #a4a4a4;
  box-shadow: 1px 0 #fff;
  &:first-child {
    padding: 0 4px 0 0;
  }
`;

const TabButton = styled.button`
  height: 20px;
  padding: 0 5px;
  border: 1px solid transparent;
  border-width: 1px 0;
  ${(props) =>
    props.$active &&
    css`
      border-width: 1px;
      border-color: #6e6e6e #fff #fff #6e6e6e;
      background: #f8f8f8;
    `}
`;

const Detail = styled.div`
  display: flex;
  flex: 1;
  min-height: 0;
  padding: 0 0 1px 1px;
`;

const DetailFrame = styled.div`
  flex: 1;
  min-width: 0;
  padding: 1px;
  border: 1px solid #a9a9ad;
  background: #fff;
`;

const SidePanel = styled.div`
  flex: none;
  width: 128px;
  padding: 5px 6px 0 7px;
  ${song}
`;

const Actions = styled.div`
  display: grid;
  grid-template-columns: 1fr 1fr;
  gap: 6px;
  padding: 0 8px 0 4px;
`;

const Action = styled.button`
  grid-column: ${(props) => (props.$wide ? "span 2" : "auto")};
  height: 23px;
  border: 1px solid #bfbfbf;
  background: #ccc;
  color: #838383;
`;

const Fieldset = styled.fieldset`
  display: grid;
  grid-template-columns: 67px 1fr;
  row-gap: 7px;
  padding: 8px 0 10px 0;
  margin-top: 2px;
  border: 1px solid #dcdcdc;
  legend {
    margin-left: 5px;
    padding: 0 1px;
  }
  label {
    display: flex;
    align-items: center;
    gap: 3px;
  }
  input {
    appearance: none;
    flex: none;
    width: 13px;
    height: 13px;
    border: 1px solid #333;
    border-radius: 50%;
    background: #fff;
  }
  input:checked {
    background: radial-gradient(circle, #222 3px, #fff 4px);
  }
`;

const StatusBar = styled.footer`
  display: flex;
  flex: none;
  gap: 3px;
  height: 21px;
  padding: 1px 1px 1px 0;
  ${song}
`;

const StatusCell = styled.div`
  flex: ${(props) => props.$grow} 1 0;
  min-width: 0;
  overflow: hidden;
  padding: 0 1px;
  border: 1px solid #d4d4d4;
  line-height: 17px;
  background: linear-gradient(#fff, #f0f0f0);
`;

const Bar = styled.div`
  display: flex;
  flex: none;
  height: 40px;
  background: #03090c;
  color: #fff;
`;

const Start = styled.button`
  display: grid;
  place-items: center;
  flex: none;
  width: 48px;
  background: #000;
`;

const Search = styled.div`
  display: flex;
  align-items: center;
  flex: none;
  gap: 5px;
  width: 344px;
  padding: 0 15px 0 9px;
  background: #333;
  input {
    flex: 1;
    min-width: 0;
    font-size: 14px;
    outline: none;
  }
  input::placeholder {
    color: #9a9a9a;
    opacity: 1;
  }
`;

const Apps = styled.div`
  display: flex;
  flex: 1;
  gap: 2px;
  padding-left: 1px;
`;

const TaskButton = styled.button`
  display: grid;
  place-items: center;
  width: 48px;
  background: ${(props) => (props.$active ? "#3a4144" : "none")};
  border-bottom: 2px solid transparent;
  border-image: ${(props) =>
    props.$open
      ? props.$active
        ? "linear-gradient(#76b9f5, #76b9f5) 2"
        : "linear-gradient(90deg, transparent 4px, #76b9f5 4px 44px, transparent 44px) 2"
      : "none"};
`;

const Cpu = styled.div`
  width: 50px;
  padding-top: 4px;
  text-align: center;
`;

const Tray = styled.div`
  display: flex;
  align-items: center;
  gap: 8px;
  padding: 0 16px 0 18px;
  span {
    width: 18px;
    font-size: 14px;
    text-align: center;
  }
  span + svg {
    margin-left: 4px;
  }
`;

const Clock = styled.div`
  width: 62px;
  padding-top: 1px;
  line-height: 19px;
  text-align: center;
`;

const Notice = styled.button`
  position: relative;
  display: grid;
  place-items: center;
  width: 53px;
  margin-right: 5px;
  border-right: 1px solid #5a5f62;
`;

const Badge = styled.span`
  position: absolute;
  left: 24px;
  top: 18px;
  width: 17px;
  height: 17px;
  border: 1px solid #8c8c8c;
  border-radius: 50%;
  background: #333;
  line-height: 15px;
  font-weight: 700;
`;

const Ime = styled.div`
  position: absolute;
  right: 95px;
  bottom: 45px;
  display: flex;
  align-items: center;
  gap: 6px;
  height: 24px;
  padding-right: 3px;
  border: 1px solid #b4c4d8;
  background: #fff;
  color: #1e74c6;
  > svg:first-child {
    margin-left: -12px;
  }
  b {
    width: 16px;
    font-size: 15px;
  }
`;

const Ball = styled.div`
  position: absolute;
  top: -26px;
  right: 238px;
  width: 44px;
  height: 44px;
  padding-top: 24px;
  border: 1px solid #3c9c50;
  border-radius: 50%;
  background: #46c45e;
  box-shadow: 0 2px 6px rgba(0, 0, 0, 0.4), inset 0 0 0 1px #8ee09c;
  color: #fff;
  font-weight: 700;
  text-align: center;
`;

const Marks = styled.svg`
  position: absolute;
  top: 0;
  left: 0;
  fill: none;
  stroke: #f00;
  stroke-width: 3;
  pointer-events: none;
`;
